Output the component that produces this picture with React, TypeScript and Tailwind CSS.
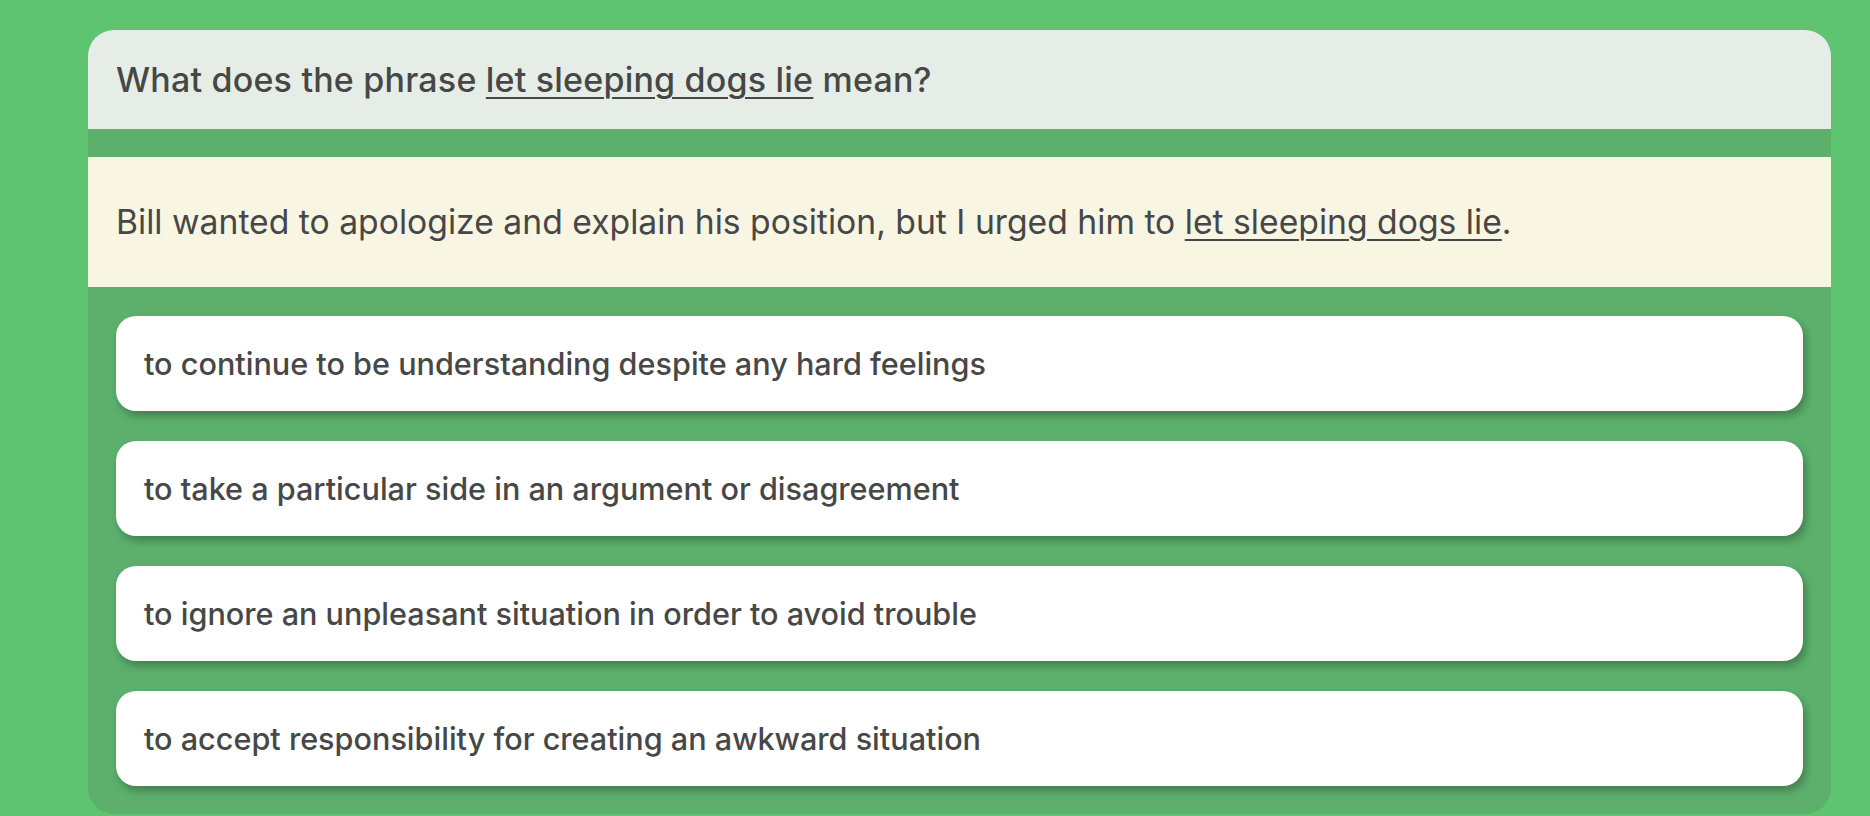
import React from 'react';

const options = [
    'to continue to be understanding despite any hard feelings',
    'to take a particular side in an argument or disagreement',
    'to ignore an unpleasant situation in order to avoid trouble',
    'to accept responsibility for creating an awkward situation',
];

function Phrase({ children }: { children: React.ReactNode }) {
    return <span className="underline decoration-[2px] underline-offset-[5px]">{children}</span>;
}

export default function App() {
    return (
        <div className="min-h-screen bg-[#5ec471] pl-[88px] pr-[39px] pt-[30px] font-['Inter',sans-serif] text-[#474747]">
            {/* ── Question card ─────────────────────────── */}
            <div className="flex flex-col overflow-hidden rounded-[26px] bg-[#5cb06c]">
                <div className="flex h-[99px] items-center bg-[#e6ede6] px-[28px]">
                    <h1 className="text-[34px] font-medium tracking-[0.2px]">
                        What does the phrase <Phrase>let sleeping dogs lie</Phrase> mean?
                    </h1>
                </div>

                <div className="mt-[28px] flex h-[130px] items-center bg-[#f8f6e3] px-[28px]">
                    <p className="text-[33.7px] font-normal">
                        Bill wanted to apologize and explain his position, but I urged him to{' '}
                        <Phrase>let sleeping dogs lie</Phrase>.
                    </p>
                </div>

                {/* Answer options */}
                <div className="flex flex-col gap-[30px] p-[28px] pt-[29px]">
                    {options.map((o) => (
                        <button
                            key={o}
                            className="flex h-[95px] items-center rounded-[20px] bg-white px-[28px] text-left text-[30.6px] font-medium shadow-[3px_5px_8px_rgba(0,0,0,0.28)]"
                        >
                            {o}
                        </button>
                    ))}
                </div>
            </div>
        </div>
    );
}
